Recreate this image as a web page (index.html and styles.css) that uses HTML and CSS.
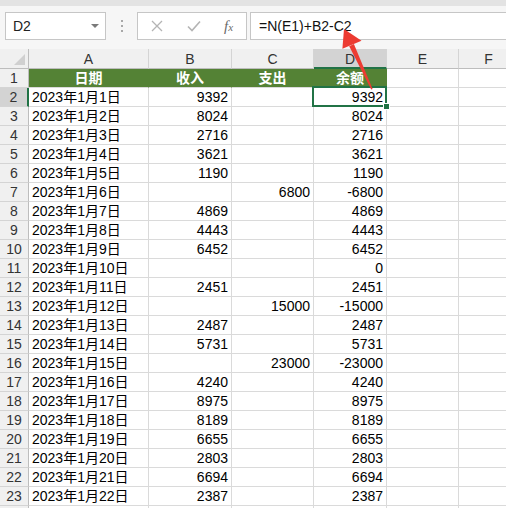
FILE: index.html
```html
<!DOCTYPE html>
<html lang="zh">
<head>
<meta charset="utf-8">
<title>Sheet</title>
<link rel="stylesheet" href="styles.css">
</head>
<body>
<div class="app">
  <div class="topstrip"></div>
  <div class="toolbar">
    <div class="namebox"><span class="name">D2</span><span class="caret"></span></div>
    <div class="sep"><i></i><i></i><i></i></div>
    <div class="btns">
      <svg class="ico" width="12" height="12" viewBox="0 0 12 12"><path d="M1 1L11 11M11 1L1 11" stroke="#b4b4b4" stroke-width="1.3" fill="none"/></svg>
      <svg class="ico" width="14" height="12" viewBox="0 0 14 12"><path d="M1 6.5L5 10.5L13 1.5" stroke="#b4b4b4" stroke-width="1.6" fill="none"/></svg>
      <span class="fx">f<span class="fxx">x</span></span>
    </div>
    <div class="formula">=N(E1)+B2-C2</div>
  </div>
  <div class="sheet" id="sheet">
    <div class="ch corner"><span class="tri"></span></div>
    <div class="ch">A</div><div class="ch">B</div><div class="ch">C</div><div class="ch sel">D</div><div class="ch">E</div><div class="ch">F</div>
  </div>
  <svg class="arrow" width="506" height="508" viewBox="0 0 506 508">
    <polygon fill="#ec3b32" points="372.6,89 371.2,89.4 349.2,46.3 353.9,43.9"/>
    <polygon fill="#ec3b32" points="344,29 342.4,48.8 361.5,40.8"/>
  </svg>
</div>
<script>
(function(){
  var rows=[
    ["2023年1月1日","9392","","9392"],
    ["2023年1月2日","8024","","8024"],
    ["2023年1月3日","2716","","2716"],
    ["2023年1月4日","3621","","3621"],
    ["2023年1月5日","1190","","1190"],
    ["2023年1月6日","","6800","-6800"],
    ["2023年1月7日","4869","","4869"],
    ["2023年1月8日","4443","","4443"],
    ["2023年1月9日","6452","","6452"],
    ["2023年1月10日","","","0"],
    ["2023年1月11日","2451","","2451"],
    ["2023年1月12日","","15000","-15000"],
    ["2023年1月13日","2487","","2487"],
    ["2023年1月14日","5731","","5731"],
    ["2023年1月15日","","23000","-23000"],
    ["2023年1月16日","4240","","4240"],
    ["2023年1月17日","8975","","8975"],
    ["2023年1月18日","8189","","8189"],
    ["2023年1月19日","6655","","6655"],
    ["2023年1月20日","2803","","2803"],
    ["2023年1月21日","6694","","6694"],
    ["2023年1月22日","2387","","2387"],
    ["","","",""]
  ];
  var s=document.getElementById('sheet');
  function cell(cls,txt){var d=document.createElement('div');d.className=cls;d.textContent=txt;s.appendChild(d);return d;}
  cell('rh','1');
  ["日期","收入","支出","余额"].forEach(function(t){cell('c hd',t);});
  cell('c','');cell('c','');
  rows.forEach(function(r,i){
    var n=i+2;
    var last=(i===rows.length-1);
    cell(n===2?'rh sel':'rh',last?'':String(n));
    cell('c txt',r[0]);
    cell('c num',r[1]);
    cell('c num',r[2]);
    cell(n===2?'c num active':'c num',r[3]);
    cell('c','');cell('c','');
  });
})();
</script>
</body>
</html>
```

FILE: styles.css
```css
html, body {
  margin: 0;
  padding: 0;
  background: #ffffff;
}
body {
  width: 506px;
  height: 508px;
  overflow: hidden;
  font-family: "Liberation Sans", "Noto Sans CJK SC", sans-serif;
  font-size: 14px;
  color: #000;
}
.app {
  position: relative;
  width: 506px;
  height: 508px;
  overflow: hidden;
}
.topstrip {
  height: 6px;
  background: #e3e3e3;
}
.toolbar {
  height: 43px;
  background: #f6f6f6;
  display: flex;
  align-items: flex-start;
  padding-top: 6px;
  box-sizing: border-box;
}
.namebox {
  margin-left: 5px;
  width: 101px;
  height: 28px;
  box-sizing: border-box;
  border: 1px solid #c6c6c6;
  background: #fff;
  display: flex;
  align-items: center;
  justify-content: space-between;
  padding: 0 6px 0 7px;
}
.name {
  font-size: 14px;
  color: #222;
}
.caret {
  width: 0;
  height: 0;
  border-left: 4px solid transparent;
  border-right: 4px solid transparent;
  border-top: 4px solid #7a7a7a;
}
.sep {
  width: 31px;
  height: 28px;
  display: flex;
  flex-direction: column;
  align-items: center;
  justify-content: center;
  gap: 3px;
}
.sep i {
  display: block;
  width: 2px;
  height: 2px;
  background: #a8a8a8;
}
.btns {
  width: 110px;
  height: 28px;
  box-sizing: border-box;
  border: 1px solid #c6c6c6;
  background: #fff;
  display: flex;
  align-items: center;
  padding: 0 0 0 13px;
  gap: 0;
}
.btns .ico:first-child {
  margin-right: 24px;
}
.btns .ico:nth-child(2) {
  margin-right: 23px;
}
.fx {
  font-family: "Liberation Serif", serif;
  font-style: italic;
  font-size: 15px;
  color: #6a6a6a;
  line-height: 1;
}
.fxx {
  font-size: 11px;
}
.formula {
  margin-left: 3px;
  flex: 1;
  margin-right: -4px;
  height: 28px;
  box-sizing: border-box;
  border: 1px solid #c6c6c6;
  background: #fff;
  font-size: 14px;
  line-height: 26px;
  padding-left: 8px;
  color: #111;
}
.sheet {
  display: grid;
  grid-template-columns: 29px 120px 83px 82px 73px 72px 60px;
  grid-template-rows: 20px;
  grid-auto-rows: 19px;
  background: #fff;
}
.sheet > div {
  box-sizing: border-box;
  white-space: nowrap;
  overflow: hidden;
}
.ch {
  background: #f0f0f0;
  border-right: 1px solid #d4d4d4;
  border-bottom: 1px solid #bdbdbd;
  text-align: center;
  line-height: 21px;
  color: #333;
  font-size: 14px;
}
.ch.sel {
  background: #d3d3d3;
  border-bottom: 2px solid #217346;
  line-height: 20px;
}
.corner {
  position: relative;
  border-right: 1px solid #bdbdbd;
}
.tri {
  position: absolute;
  right: 3px;
  bottom: 3px;
  width: 0;
  height: 0;
  border-left: 11px solid transparent;
  border-bottom: 11px solid #d0d0d0;
}
.rh {
  background: #f0f0f0;
  border-right: 1px solid #bdbdbd;
  border-bottom: 1px solid #d4d4d4;
  text-align: center;
  color: #333;
  line-height: 19px;
}
.rh.sel {
  background: #d3d3d3;
  border-right: 2px solid #217346;
}
.c {
  border-right: 1px solid #dadada;
  border-bottom: 1px solid #dadada;
  line-height: 19px;
  color: #000;
}
.txt {
  padding-left: 3px;
}
.num {
  text-align: right;
  padding-right: 3px;
}
.hd {
  background: #548235;
  color: #fff;
  font-weight: bold;
  text-align: center;
  border-right-color: #548235;
}
.active {
  position: relative;
  overflow: visible !important;
}
.active::before {
  content: "";
  position: absolute;
  left: -2px;
  top: -2px;
  right: -1px;
  bottom: -1px;
  border: 2px solid #217346;
  pointer-events: none;
}
.active::after {
  content: "";
  position: absolute;
  right: -4px;
  bottom: -4px;
  background: #217346;
  border: 1px solid #fff;
  box-sizing: border-box;
  width: 7px;
  height: 7px;
}
.arrow {
  position: absolute;
  left: 0;
  top: 0;
  pointer-events: none;
}
```
